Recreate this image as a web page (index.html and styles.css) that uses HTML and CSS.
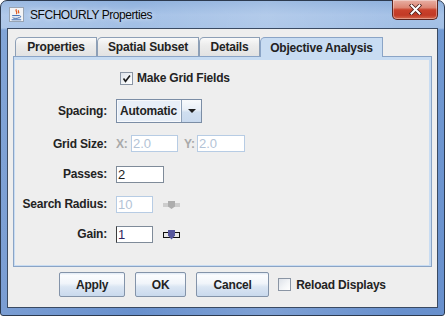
FILE: index.html
```html
<!DOCTYPE html>
<html>
<head>
<meta charset="utf-8">
<link rel="stylesheet" href="styles.css">
</head>
<body>
<div class="window">
  <div class="titlebar">
    <svg class="app-icon" width="15" height="15" viewBox="0 0 15 15">
      <rect x="0.5" y="0.5" width="14" height="14" fill="#f3f4f6" stroke="#98a4b3"/>
      <path d="M7.5 2.2c-2 1.6 1.8 2.8-.2 5M9.6 3.2c-1.2 1 1 1.8-.1 3.2" stroke="#e0561a" fill="none" stroke-width="1.2"/>
      <path d="M3.2 8.6h7.2c1.6 0 1.6 2.2-.2 2.2M3.6 10.6c.6 1 5.8 1 6.4 0M2.6 12.8h9.6" stroke="#3a68b0" fill="none" stroke-width="1"/>
    </svg>
    <span class="title">SFCHOURLY Properties</span>
    <div class="close">
      <svg width="13" height="11" viewBox="0 0 13 11">
        <path d="M2.5 1.5l8 8M10.5 1.5l-8 8" stroke="#4a1d18" stroke-width="3.6" stroke-linecap="square"/>
        <path d="M2.5 1.5l8 8M10.5 1.5l-8 8" stroke="#ffffff" stroke-width="2" stroke-linecap="square"/>
      </svg>
    </div>
  </div>
  <div class="client">
    <div class="tabs">
      <div class="tab tab-props">Properties</div>
      <div class="tab tab-spatial">Spatial Subset</div>
      <div class="tab tab-details">Details</div>
      <div class="tab tab-oa selected">Objective Analysis</div>
    </div>
    <div class="panel">
      <div class="panel-inner">
        <div class="row row-check">
          <span class="label"></span>
          <div class="ctrl ctrl-check">
            <span class="checkbox">
              <svg width="11" height="11" viewBox="0 0 11 11"><path d="M2.5 5.5l2 2.8L9 2.5" stroke="#1c1c1c" stroke-width="1.6" fill="none"/></svg>
            </span>
            <span class="check-text">Make Grid Fields</span>
          </div>
        </div>
        <div class="row row-spacing">
          <span class="label">Spacing:</span>
          <div class="ctrl">
            <div class="combo">
              <div class="combo-text">Automatic</div>
              <div class="combo-btn"><span class="arrow"></span></div>
            </div>
          </div>
        </div>
        <div class="row row-grid">
          <span class="label">Grid Size:</span>
          <div class="ctrl">
            <span class="sublabel disabled-text">X:</span>
            <div class="field field-xy disabled">2.0</div>
            <span class="sublabel sublabel-y disabled-text">Y:</span>
            <div class="field field-xy field-y disabled">2.0</div>
          </div>
        </div>
        <div class="row row-std">
          <span class="label">Passes:</span>
          <div class="ctrl">
            <div class="field field-passes">2</div>
          </div>
        </div>
        <div class="row row-std row-tight">
          <span class="label">Search Radius:</span>
          <div class="ctrl">
            <div class="field field-small disabled">10</div>
            <svg class="slider slider-off" width="17" height="8" viewBox="0 0 17 8">
              <rect x="0" y="2" width="17" height="4" fill="#cdcdcd"/>
              <path d="M5 0h7v5.5l-3.5 2.5l-3.5-2.5z" fill="#adadad"/>
            </svg>
          </div>
        </div>
        <div class="row row-std row-tight">
          <span class="label">Gain:</span>
          <div class="ctrl">
            <div class="field field-small field-focus">1</div>
            <svg class="slider" width="17" height="11" viewBox="0 0 17 11">
              <rect x="0.5" y="3.5" width="16" height="5" fill="#e6e6e6" stroke="#111"/>
              <path d="M5 1h7v5.5l-3.5 4l-3.5-4z" fill="#55559c"/>
            </svg>
          </div>
        </div>
      </div>
    </div>
    <div class="buttons">
      <div class="btn btn-apply">Apply</div>
      <div class="btn btn-ok">OK</div>
      <div class="btn btn-cancel">Cancel</div>
      <div class="reload">
        <span class="checkbox"></span>
        <span class="check-text">Reload Displays</span>
      </div>
    </div>
  </div>
</div>
</body>
</html>
```
FILE: styles.css
```css
* { box-sizing: border-box; }

body {
  margin: 0;
  font-family: "Liberation Sans", Arial, sans-serif;
  font-size: 12px;
  font-weight: bold;
  letter-spacing: -0.2px;
  color: #232323;
  background: #ffffff;
}

.window {
  width: 445px;
  height: 316px;
  border: 1px solid #2c3a4f;
  border-radius: 7px 7px 3px 3px;
  padding: 0 6px 7px;
  display: flex;
  flex-direction: column;
  background:
    linear-gradient(90deg, rgba(255,255,255,0.12), rgba(255,255,255,0) 30%, rgba(255,255,255,0.15) 60%, rgba(255,255,255,0) 90%),
    linear-gradient(180deg, #8fb1dd 0, #a6c2e7 14px, #a2bfe5 27px, #7199d2 29px, #6890cd 100%);
}

.titlebar {
  height: 27px;
  display: flex;
  align-items: center;
  font-weight: normal;
}

.app-icon {
  margin-left: 2px;
  flex: none;
}

.title {
  margin-left: 6px;
  font-size: 12px;
  letter-spacing: -0.45px;
  color: #0a0a0a;
  text-shadow: 0 0 5px rgba(255,255,255,0.8);
}

.close {
  margin-left: auto;
  margin-right: 0;
  align-self: flex-start;
  margin-top: -1px;
  width: 46px;
  height: 20px;
  border: 1px solid #5a2520;
  border-top: none;
  border-radius: 0 0 5px 5px;
  background: linear-gradient(180deg, #e8b0a4 0, #dc8573 40%, #c9412b 52%, #c23a26 80%, #d66a4e 100%);
  box-shadow: inset 0 0 0 1px rgba(255,255,255,0.35);
  display: flex;
  align-items: center;
  justify-content: center;
}

.client {
  flex: 1;
  border: 1px solid #3a4a62;
  background: #eeeeee;
  padding: 8px 5px 0;
  display: flex;
  flex-direction: column;
}

.tabs {
  display: flex;
  height: 19px;
  margin-left: 2px;
}

.tab {
  height: 19px;
  border: 1px solid #8d9fb6;
  border-bottom: none;
  border-radius: 5px 0 0 0;
  background: linear-gradient(180deg, #fafafa 0, #ececec 40%, #e2e2e2 100%);
  display: flex;
  align-items: center;
  justify-content: center;
  color: #222;
}

.tab-props { width: 82px; }
.tab-spatial { width: 102px; }
.tab-details { width: 61px; }
.tab-oa { width: 123px; }

.tab.selected {
  height: 20px;
  margin-bottom: -1px;
  position: relative;
  z-index: 1;
  background: #c8dcf2;
  border-color: #8aa4c6;
}

.panel {
  height: 211px;
  border: 1px solid #8aa4c6;
}

.panel-inner {
  height: 100%;
  border: solid #c8dcf2;
  border-width: 3px 2px 1px 1px;
  display: flex;
  flex-direction: column;
}

.row {
  display: grid;
  grid-template-columns: 92px auto;
  column-gap: 9px;
  align-items: center;
}

.label {
  text-align: right;
  white-space: nowrap;
}

.ctrl {
  display: flex;
  align-items: center;
}

.row-check { height: 13px; margin-top: 11px; }
.row-spacing { height: 24px; margin-top: 15px; }
.row-grid { height: 19px; margin-top: 11px; }
.row-std { height: 20px; margin-top: 11px; }
.row-tight { margin-top: 10px; }

.ctrl-check { padding-left: 4px; }

.checkbox {
  width: 13px;
  height: 13px;
  border: 1px solid #8a95a4;
  background: linear-gradient(135deg, #dde2e9 0, #f4f6f8 60%, #ffffff 100%);
  display: flex;
  align-items: center;
  justify-content: center;
  flex: none;
}

.check-text {
  margin-left: 4px;
  white-space: nowrap;
}

.combo {
  display: flex;
  width: 86px;
  height: 24px;
  border: 1px solid #7b8da5;
}

.combo-text {
  flex: 1;
  background: #e8eff8;
  border: 1px solid #f7f9fc;
  padding-left: 2px;
  display: flex;
  align-items: center;
}

.combo-btn {
  width: 20px;
  border-left: 1px solid #8ea1b8;
  background: linear-gradient(180deg, #f8fafc 0, #e8eff7 45%, #d0dff0 55%, #c9daee 100%);
  display: flex;
  align-items: center;
  justify-content: center;
}

.arrow {
  width: 0;
  height: 0;
  border-left: 4px solid transparent;
  border-right: 4px solid transparent;
  border-top: 4px solid #1e1e1e;
}

.sublabel {
  width: 15px;
}

.sublabel-y {
  margin-left: 6px;
  width: 13px;
}

.disabled-text { color: #a9a9a9; }

.field {
  height: 100%;
  border: 1px solid #7f8b99;
  background: #ffffff;
  padding-left: 1px;
  display: flex;
  align-items: center;
  font-weight: normal;
  font-size: 13px;
  letter-spacing: 0;
  color: #1e1e1e;
}

.field-xy { width: 47px; }
.field-y { width: 48px; }
.field-passes { width: 48px; }
.field-small { width: 37px; }

.field.disabled {
  border-color: #b7cce4;
  color: #b3c3d6;
}

.field-focus {
  color: #2f2560;
  border-left-color: #3c3c3c;
}

.slider {
  margin-left: 10px;
  flex: none;
}

.slider-off { margin-top: 2px; }

.buttons {
  display: flex;
  justify-content: center;
  align-items: center;
  gap: 10px;
  margin-top: 5px;
  height: 25px;
}

.btn {
  height: 25px;
  border: 1px solid #8393a9;
  border-radius: 2px;
  background: linear-gradient(180deg, #dfe9f5 0, #fbfcfe 10%, #f1f5fa 45%, #dbe6f3 60%, #c9d9ed 100%);
  display: flex;
  align-items: center;
  justify-content: center;
}

.btn-apply { width: 66px; }
.btn-ok { width: 51px; }
.btn-cancel { width: 73px; }

.reload {
  display: flex;
  align-items: center;
  margin-left: -1px;
}

.reload .check-text { margin-left: 5px; }
```
